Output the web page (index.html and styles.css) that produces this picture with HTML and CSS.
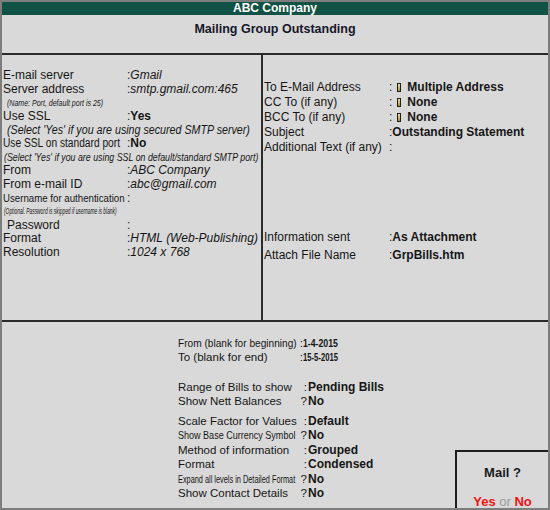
FILE: index.html
```html
<!DOCTYPE html>
<html lang="en">
<head>
<meta charset="utf-8">
<title>Mailing Group Outstanding</title>
<link rel="stylesheet" href="styles.css">
</head>
<body>
<div class="screen">
  <header class="company">ABC Company</header>
  <div class="title">Mailing Group Outstanding</div>

  <div class="panels">
    <section class="panel left">
      <div class="row"><span class="lbl">E-mail server</span><span class="sep">:</span><span class="val it">Gmail</span></div>
      <div class="row"><span class="lbl">Server address</span><span class="sep">:</span><span class="val it">smtp.gmail.com:465</span></div>
      <div class="row note"><span class="sq n1">(Name: Port, default port is 25)</span></div>
      <div class="row"><span class="lbl">Use SSL</span><span class="sep">:</span><span class="val b">Yes</span></div>
      <div class="row note"><span class="sq n2">(Select 'Yes' if you are using secured SMTP server)</span></div>
      <div class="row"><span class="lbl"><span class="sq l1">Use SSL on standard port</span></span><span class="sep">:</span><span class="val b">No</span></div>
      <div class="row note note-flush"><span class="sq n3">(Select 'Yes' if you are using SSL on default/standard SMTP port)</span></div>
      <div class="row"><span class="lbl">From</span><span class="sep">:</span><span class="val it">ABC Company</span></div>
      <div class="row"><span class="lbl">From e-mail ID</span><span class="sep">:</span><span class="val it">abc@gmail.com</span></div>
      <div class="row"><span class="lbl"><span class="sq l2">Username for authentication</span></span><span class="sep">:</span></div>
      <div class="row note note-flush"><span class="sq n4">(Optional. Password is skipped if username is blank)</span></div>
      <div class="row"><span class="lbl indent">Password</span><span class="sep">:</span></div>
      <div class="row"><span class="lbl">Format</span><span class="sep">:</span><span class="val it">HTML (Web-Publishing)</span></div>
      <div class="row"><span class="lbl">Resolution</span><span class="sep">:</span><span class="val it">1024 x 768</span></div>
    </section>

    <section class="panel right">
      <div class="group">
        <div class="row"><span class="lbl">To E-Mail Address</span><span class="sep">:</span><span class="pick"></span><span class="val b">Multiple Address</span></div>
        <div class="row"><span class="lbl">CC To (if any)</span><span class="sep">:</span><span class="pick"></span><span class="val b">None</span></div>
        <div class="row"><span class="lbl">BCC To (if any)</span><span class="sep">:</span><span class="pick"></span><span class="val b">None</span></div>
        <div class="row"><span class="lbl">Subject</span><span class="sep">:</span><span class="val b">Outstanding Statement</span></div>
        <div class="row"><span class="lbl">Additional Text (if any)</span><span class="sep">:</span></div>
      </div>
      <div class="group info">
        <div class="row"><span class="lbl">Information sent</span><span class="sep">:</span><span class="val b">As Attachment</span></div>
        <div class="row"><span class="lbl">Attach File Name</span><span class="sep">:</span><span class="val b">GrpBills.htm</span></div>
      </div>
    </section>
  </div>

  <div class="bottom">
    <div class="options">
      <div class="group">
        <div class="row"><span class="lbl"><span class="sq b1">From (blank for beginning)</span></span><span class="sep tight">:</span><span class="val b"><span class="sq d1">1-4-2015</span></span></div>
        <div class="row"><span class="lbl">To (blank for end)</span><span class="sep tight">:</span><span class="val b"><span class="sq d2">15-5-2015</span></span></div>
      </div>
      <div class="group range">
        <div class="row"><span class="lbl">Range of Bills to show</span><span class="sep">:</span><span class="val b">Pending Bills</span></div>
        <div class="row"><span class="lbl">Show Nett Balances</span><span class="sep">?</span><span class="val b">No</span></div>
      </div>
      <div class="group scale">
        <div class="row"><span class="lbl">Scale Factor for Values</span><span class="sep">:</span><span class="val b">Default</span></div>
        <div class="row"><span class="lbl"><span class="sq b2">Show Base Currency Symbol</span></span><span class="sep">?</span><span class="val b">No</span></div>
        <div class="row"><span class="lbl">Method of information</span><span class="sep">:</span><span class="val b">Grouped</span></div>
        <div class="row"><span class="lbl">Format</span><span class="sep">:</span><span class="val b">Condensed</span></div>
        <div class="row"><span class="lbl"><span class="sq b3">Expand all levels in Detailed Format</span></span><span class="sep">?</span><span class="val b">No</span></div>
        <div class="row"><span class="lbl">Show Contact Details</span><span class="sep">?</span><span class="val b">No</span></div>
      </div>
    </div>

    <div class="mailbox">
      <div class="ask">Mail ?</div>
      <div class="answer"><span class="yn">Yes</span> <span class="or">or</span> <span class="yn">No</span></div>
    </div>
  </div>
</div>
</body>
</html>
```

FILE: styles.css
```css
html, body {
  margin: 0;
  padding: 0;
  background: #d9d9d9;
}

body {
  font-family: "Liberation Sans", Arial, sans-serif;
  color: #161616;
}

.screen {
  box-sizing: border-box;
  width: 550px;
  height: 510px;
  border: 2px solid #7d7d7d;
  background: #d9d9d9;
  display: flex;
  flex-direction: column;
  overflow: hidden;
}

.company {
  height: 13px;
  line-height: 13px;
  background: #115246;
  color: #ffffff;
  font-weight: bold;
  font-size: 12px;
  text-align: center;
}

.title {
  height: 38px;
  box-sizing: border-box;
  padding-top: 8px;
  line-height: 13px;
  font-size: 12.5px;
  font-weight: bold;
  text-align: center;
  color: #16162a;
}

.panels {
  display: flex;
  height: 267px;
  box-sizing: border-box;
  border-top: 2px solid #2b2b2b;
}

.panel {
  box-sizing: border-box;
}

.left {
  width: 261px;
  flex: none;
  border-right: 2px solid #2b2b2b;
  padding: 14.2px 0 0 1px;
}

.right {
  flex: 1;
  padding: 24.5px 0 0 1px;
}

.row {
  display: flex;
  align-items: center;
  white-space: nowrap;
  font-size: 12px;
  height: 13.6px;
  line-height: 13.6px;
}

.lbl {
  flex: none;
  width: 124px;
}

.indent {
  padding-left: 4px;
  box-sizing: border-box;
}

.sep {
  flex: none;
}

.val.it {
  font-style: italic;
}

.val.b {
  font-weight: bold;
}

.note {
  padding-left: 4px;
}

.note-flush {
  padding-left: 1px;
}

/* horizontally squeezed text */
.sq {
  display: inline-block;
  transform-origin: 0 50%;
}

.n1 { font-size: 9.5px; font-style: italic; transform: scaleX(0.74); }
.n2 { font-size: 12px; font-style: italic; transform: scaleX(0.89); }
.n3 { font-size: 10.5px; font-style: italic; transform: scaleX(0.84); }
.n4 { font-size: 8.5px; font-style: italic; transform: scaleX(0.57); }
.l1 { font-size: 12px; transform: scaleX(0.85); }
.l2 { font-size: 11px; transform: scaleX(0.88); }

/* right panel */
.right .row {
  height: 15px;
  line-height: 15px;
}

.right .lbl {
  width: 125px;
}

.right .info {
  margin-top: 73.5px;
}

.right .info .row {
  height: 18px;
  line-height: 18px;
}

.pick {
  display: inline-block;
  box-sizing: border-box;
  width: 4px;
  height: 9px;
  margin: 0 6px 0 5px;
  border: 1px solid #1e1e1e;
  background: linear-gradient(#efe39a, #a8902e);
}

/* bottom area */
.bottom {
  position: relative;
  flex: 1;
  border-top: 2px solid #2b2b2b;
}

.options {
  padding: 14px 0 0 176px;
}

.options .row {
  height: 14px;
  line-height: 14px;
  font-size: 11.5px;
}

.options .val {
  font-size: 12px;
}

.options .lbl {
  width: 121px;
}

.options .sep {
  width: 8px;
  text-align: right;
  padding-right: 1px;
}

.options .sep.tight {
  width: 4px;
  padding-right: 0;
}

.options .range {
  margin-top: 16px;
}

.options .scale {
  margin-top: 6px;
}

.options .scale .row {
  height: 14.4px;
  line-height: 14.4px;
}

.b1 { font-size: 11.5px; transform: scaleX(0.88); }
.b2 { font-size: 10.5px; transform: scaleX(0.86); }
.b3 { font-size: 10.5px; transform: scaleX(0.70); }
.d1 { font-size: 10.5px; transform: scaleX(0.83); }
.d2 { font-size: 10.5px; transform: scaleX(0.73); }

/* Mail ? confirmation */
.mailbox {
  position: absolute;
  right: 0;
  bottom: 0;
  width: 93px;
  height: 58px;
  box-sizing: border-box;
  border-top: 2px solid #1e1e1e;
  border-left: 2px solid #1e1e1e;
  background: #d9d9d9;
  text-align: center;
  padding-top: 13.7px;
  font-size: 13px;
}

.ask {
  line-height: 14px;
  font-weight: bold;
  color: #1a1a1a;
}

.answer {
  margin-top: 15.3px;
  line-height: 14px;
}

.yn {
  color: #f01414;
  font-weight: bold;
}

.or {
  color: #9a9a9a;
}
```
